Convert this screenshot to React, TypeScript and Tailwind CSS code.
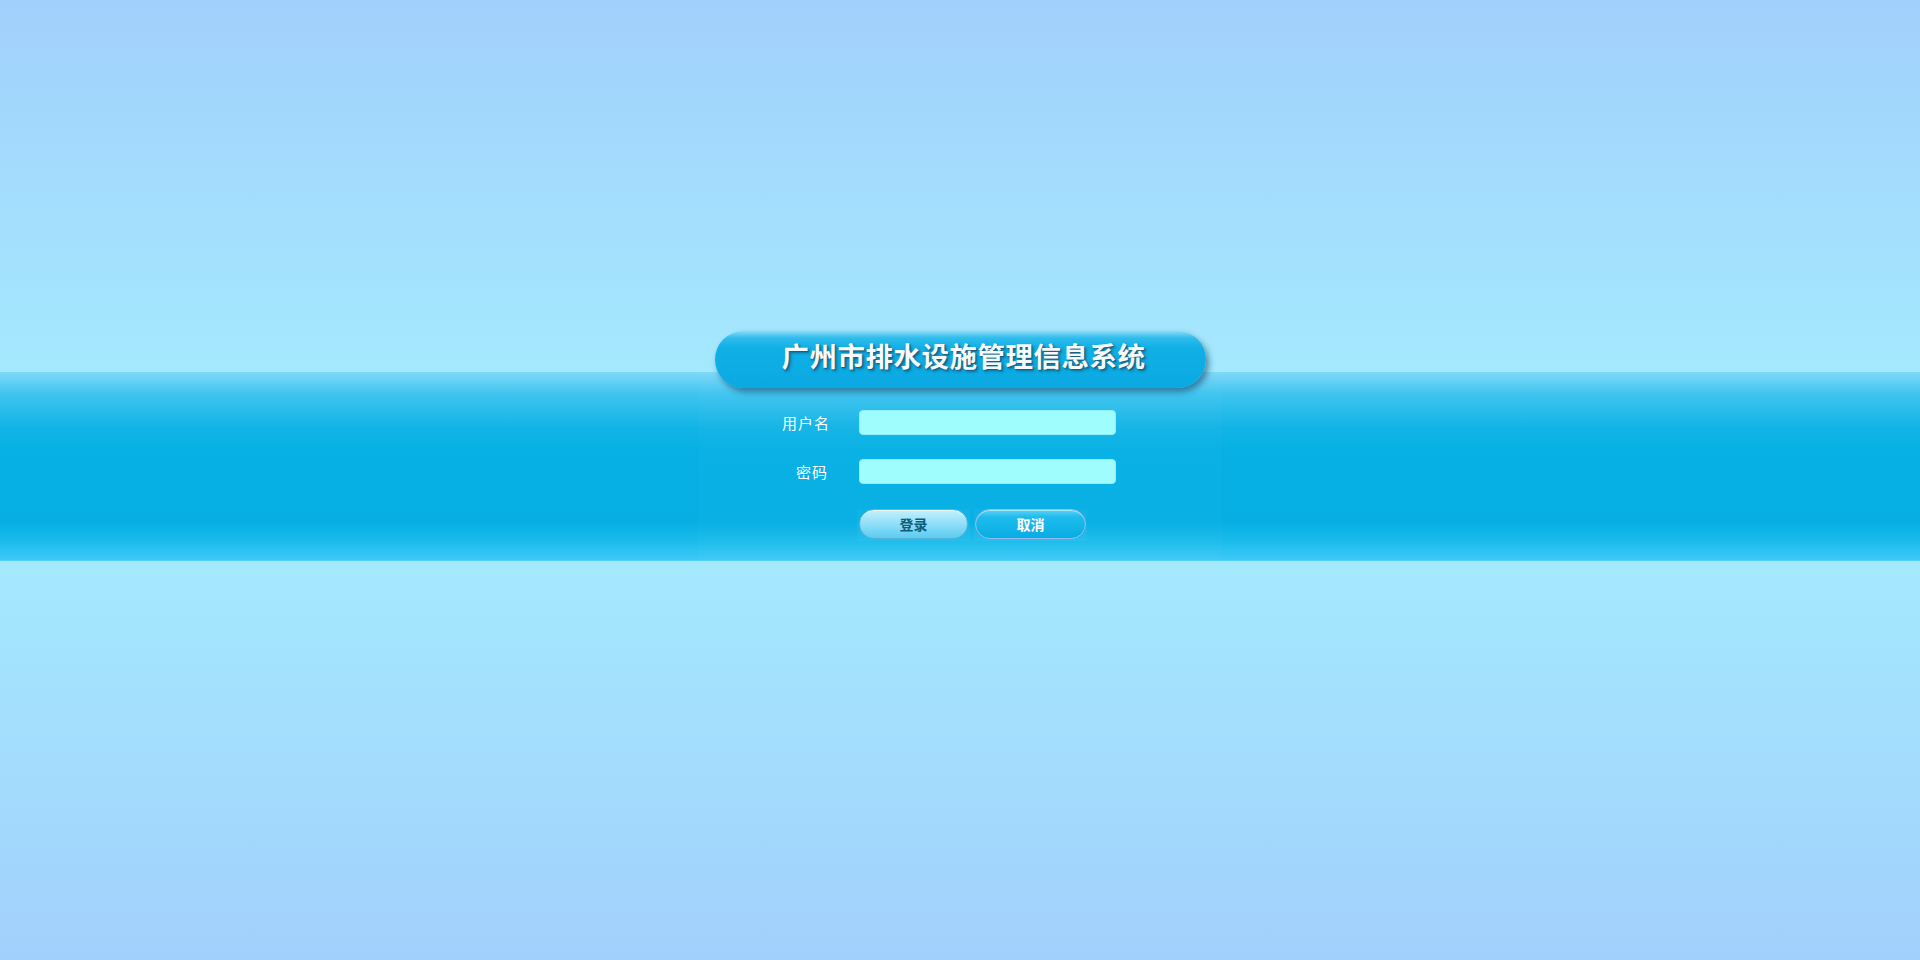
import React from 'react';

const cjk = "font-['Noto_Sans_CJK_SC','Noto_Sans',sans-serif]";

function Field({ label, type, pad }: { label: string; type: string; pad: string }) {
  return (
    <div className="flex items-center">
      <label className={`w-[133px] text-right text-[15px] leading-none tracking-[1px] text-white ${pad}`}>
        {label}
      </label>
      <input
        type={type}
        className="ml-[27px] h-[25px] w-[257px] rounded-[4px] border border-[#8ff0f8] bg-[#a0fdfe] px-2 text-[13px] text-[#03465e] outline-none"
      />
    </div>
  );
}

export default function App() {
  return (
    <div className={`flex h-[960px] w-full flex-col ${cjk}`}>
      {/* upper sky */}
      <div className="h-[372px] shrink-0 bg-gradient-to-b from-[#a2d0fc] to-[#a4e9fe]" />

      {/* band */}
      <div className="flex h-[189px] shrink-0 justify-center bg-[linear-gradient(to_bottom,#7fd9f8_0px,#3fc4f0_22px,#12b4e6_55px,#06b0e4_80px,#05afe3_150px,#1cbcec_170px,#3ec9f7_188px,#5fd3f9_189px)]">
        <div className="flex w-[522px] flex-col bg-white/[0.02]">
          {/* title pill */}
          <div className="-mt-[41px] ml-[16px] flex h-[57px] w-[491px] items-center justify-center rounded-full bg-[linear-gradient(to_bottom,#8adcf8_0%,#2fbdec_12%,#10afe6_30%,#0aa9e2_100%)] pb-[8px] shadow-[3px_4px_6px_rgba(10,60,95,0.55)]">
            <h1 className="pl-[6px] text-[27.5px] font-bold leading-none tracking-[0.5px] text-[#f6fafc] [text-shadow:1px_1px_1px_#1b5d7c,2px_2px_3px_rgba(0,50,80,0.5)]">
              广州市排水设施管理信息系统
            </h1>
          </div>

          <form className="mt-[22px] flex flex-col gap-[24px]" onSubmit={(e) => e.preventDefault()}>
            <Field label="用户名" type="text" pad="pr-[2px]" />
            <Field label="密码" type="password" pad="pr-[4px]" />

            <div className="ml-[158px] mt-[1px] flex gap-[4px]">
              <div className="bg-white/[0.04] px-[2px] pb-[2px]">
                <button
                  type="submit"
                  className="h-[30px] w-[109px] rounded-full border border-[#54b4de] bg-[linear-gradient(to_bottom,#c4f1fd_0%,#9ae2f9_40%,#5ccbf1_100%)] text-[14px] font-bold text-[#0b5d78] shadow-[inset_0_1px_0_rgba(255,255,255,0.7)]"
                >
                  登录
                </button>
              </div>
              <div className="bg-white/[0.04] px-[1px] pb-[2px]">
                <button
                  type="button"
                  className="h-[30px] w-[111px] rounded-full border border-[#95b9f2] bg-[linear-gradient(to_bottom,#5dd1f5_0%,#1ebced_25%,#07ace3_100%)] text-[14px] font-bold text-white shadow-[inset_0_1px_0_rgba(255,255,255,0.5)]"
                >
                  取消
                </button>
              </div>
            </div>
          </form>
        </div>
      </div>

      {/* lower sky */}
      <div className="flex-1 bg-gradient-to-b from-[#a4e9fe] to-[#a2d0fc]" />
    </div>
  );
}
